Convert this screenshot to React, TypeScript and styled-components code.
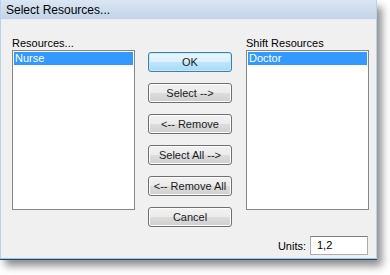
import React from "react";
import styled, { createGlobalStyle } from "styled-components";

const Global = createGlobalStyle`
  html, body { margin: 0; padding: 0; background: #ffffff; }
  body { font-family: "Liberation Sans", Arial, sans-serif; font-size: 11px; color: #000; }
`;

const Page = styled.div`
  width: 390px;
  height: 275px;
  overflow: hidden;
`;

const Window = styled.div`
  width: 375px;
  display: flex;
  flex-direction: column;
  border-left: 1px solid #b9d1ea;
  border-right: 1px solid #b9d1ea;
  border-bottom: 1px solid #9fc6e0;
  box-shadow: 0 1px 0 #24485c, 5px 7px 8px rgba(0, 0, 0, 0.45);
  background: #f0f0f0;
`;

const TitleBar = styled.div`
  height: 19px;
  box-sizing: border-box;
  padding-left: 5px;
  display: flex;
  align-items: center;
  background: linear-gradient(#dbe6f3, #c2d4e8);
  font-size: 12px;
  color: #000;
`;

const Body = styled.div`
  display: flex;
  flex-direction: column;
  padding: 17px 7px 3px 11px;
  border-top: 1px solid #e6edf5;
`;

const Columns = styled.div`
  display: flex;
  align-items: flex-start;
`;

const ListColumn = styled.div<{ $width: number }>`
  width: ${(p) => p.$width}px;
  display: flex;
  flex-direction: column;
`;

const Label = styled.div`
  height: 13px;
  line-height: 13px;
  white-space: nowrap;
`;

const ListBox = styled.div`
  height: 160px;
  box-sizing: border-box;
  border: 1px solid #828790;
  background: #ffffff;
  padding: 1px;
`;

const ListItem = styled.div<{ $selected?: boolean }>`
  height: 13px;
  line-height: 13px;
  padding-left: 1px;
  background: ${(p) => (p.$selected ? "#3399ff" : "transparent")};
  color: ${(p) => (p.$selected ? "#ffffff" : "#000")};
`;

const ButtonColumn = styled.div`
  display: flex;
  flex-direction: column;
  gap: 11px;
  padding-top: 15px;
  margin: 0 14px 0 13px;
`;

const Button = styled.button<{ $default?: boolean }>`
  width: 84px;
  height: 20px;
  box-sizing: border-box;
  padding: 0;
  font-family: "Liberation Sans", Arial, sans-serif;
  font-size: 11px;
  color: #1a1a1a;
  border-radius: 3px;
  border: 1px solid ${(p) => (p.$default ? "#3c7fb1" : "#707070")};
  box-shadow: inset 0 0 0 1px ${(p) => (p.$default ? "#c8e8f8" : "#fcfcfc")};
  background: ${(p) =>
    p.$default
      ? "linear-gradient(#eaf6fd 0%, #d9f0fc 50%, #bee6fd 51%, #a7d9f5 100%)"
      : "linear-gradient(#f2f2f2 0%, #ebebeb 50%, #dddddd 51%, #cfcfcf 100%)"};
`;

const UnitsRow = styled.div`
  margin-top: 9px;
  display: flex;
  justify-content: flex-end;
  align-items: center;
  gap: 4px;
  padding-right: 1px;
`;

const UnitsLabel = styled.span`
  font-size: 11px;
`;

const Input = styled.div`
  width: 58px;
  height: 19px;
  box-sizing: border-box;
  border: 1px solid #abadb3;
  border-top-color: #7a7d84;
  background: #fff;
  padding-left: 6px;
  line-height: 16px;
`;

export default function App() {
  return (
    <Page>
      <Global />
      <Window>
        <TitleBar>Select Resources...</TitleBar>
        <Body>
          <Columns>
            <ListColumn $width={123}>
              <Label>Resources...</Label>
              <ListBox>
                <ListItem $selected>Nurse</ListItem>
              </ListBox>
            </ListColumn>
            <ButtonColumn>
              <Button $default>OK</Button>
              <Button>Select --&gt;</Button>
              <Button>&lt;-- Remove</Button>
              <Button>Select All --&gt;</Button>
              <Button>&lt;-- Remove All</Button>
              <Button>Cancel</Button>
            </ButtonColumn>
            <ListColumn $width={123}>
              <Label>Shift Resources</Label>
              <ListBox>
                <ListItem $selected>Doctor</ListItem>
              </ListBox>
            </ListColumn>
          </Columns>
          <UnitsRow>
            <UnitsLabel>Units:</UnitsLabel>
            <Input>1,2</Input>
          </UnitsRow>
        </Body>
      </Window>
    </Page>
  );
}
